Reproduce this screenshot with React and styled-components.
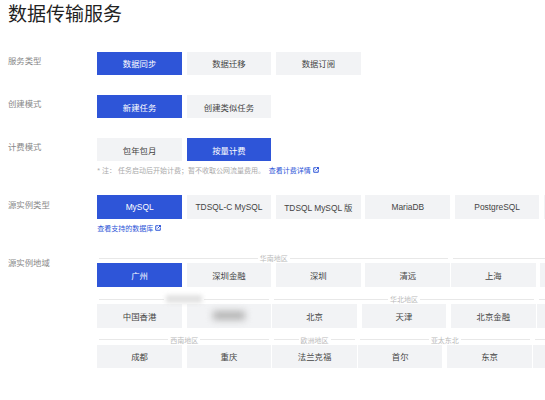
import React from 'react';
import styled, { createGlobalStyle } from 'styled-components';

const GlobalStyle = createGlobalStyle`
  html, body {
    margin: 0;
    padding: 0;
    background: #fff;
  }
  body {
    font-family: "Liberation Sans", "Noto Sans CJK SC", sans-serif;
  }
`;

const Page = styled.div`
  width: 545px;
  height: 400px;
  overflow: hidden;
  padding-left: 8px;
  box-sizing: border-box;
`;

const Title = styled.h1`
  margin: 0 0 25.7px;
  height: 24px;
  padding-top: 2px;
  font-size: 19px;
  line-height: 26px;
  font-weight: 400;
  color: #222;
  white-space: nowrap;
`;

const Row = styled.div`
  display: flex;
  margin-bottom: 19.5px;
`;

const RowLabel = styled.div`
  flex: none;
  width: 89.3px;
  margin-top: 3.3px;
  font-size: 8.4px;
  line-height: 12px;
  color: #888;
`;

const Controls = styled.div`
  flex: 1;
  min-width: 0;
`;

const Options = styled.div`
  display: flex;
  gap: 4.8px;
`;

const Option = styled.div`
  flex: none;
  width: 84.6px;
  height: 23.6px;
  display: flex;
  align-items: center;
  justify-content: center;
  font-size: 8.4px;
  white-space: nowrap;
  color: ${(p) => (p.$active ? '#fff' : '#444')};
  background: ${(p) => (p.$active ? '#2e55d8' : '#f2f3f5')};
`;

const Hint = styled.div`
  margin-top: ${(p) => p.$top}px;
  height: 10px;
  font-size: 7px;
  line-height: 10px;
  color: #aaa;
  white-space: nowrap;
`;

const HintLink = styled.span`
  margin-left: ${(p) => p.$left || 0}px;
  color: #2e55d8;

  svg {
    margin-left: 2px;
    vertical-align: -0.5px;
  }
`;

const RegionRows = styled.div`
  display: flex;
  flex-direction: column;
  gap: 7px;
`;

const RegionRow = styled.div`
  display: flex;
  gap: 1px;
`;

const Group = styled.div`
  flex: none;
`;

const GroupHead = styled.div`
  display: flex;
  align-items: center;
  gap: 2px;
  height: 10px;
  padding: 0 2px;
  font-size: 7px;
  color: #bbb;
  white-space: nowrap;

  &::before,
  &::after {
    content: '';
    flex: 1;
    height: 1px;
    background: #e8e8e8;
  }
`;

// 参考图里被打码的区域
const Masked = styled.div`
  width: ${(p) => p.$w}px;
  height: ${(p) => p.$h}px;
  background: ${(p) => p.$color};
  filter: blur(${(p) => p.$blur}px);
`;

const regionRows = [
  [
    { label: '华南地区', items: ['广州', '深圳金融', '深圳', '清远'] },
    { items: ['上海', '', ''] },
  ],
  [
    { masked: true, items: ['中国香港', null] },
    { label: '华北地区', items: ['北京', '天津', '北京金融'] },
    { items: ['', ''] },
  ],
  [
    { label: '西南地区', items: ['成都', '重庆'] },
    { label: '欧洲地区', items: ['法兰克福'] },
    { label: '亚太东北', items: ['首尔', '东京'] },
    { items: ['', ''] },
  ],
];

const LinkIcon = () => (
  <svg width="6" height="6" viewBox="0 0 12 12" fill="none" stroke="currentColor" strokeWidth="2">
    <path d="M6 1.5H1.5v9h9V6" />
    <path d="M5 7L11 1M7 1h4v4" />
  </svg>
);

const Link = ({ left, children }) => (
  <HintLink $left={left}>
    {children}
    <LinkIcon />
  </HintLink>
);

const ChoiceRow = ({ label, options, active }) => (
  <Row>
    <RowLabel>{label}</RowLabel>
    <Controls>
      <Options>
        {options.map((o) => (
          <Option key={o} $active={o === active}>{o}</Option>
        ))}
      </Options>
    </Controls>
  </Row>
);

const App = () => (
  <Page>
    <GlobalStyle />
    <Title>数据传输服务</Title>

    <ChoiceRow label="服务类型" options={['数据同步', '数据迁移', '数据订阅']} active="数据同步" />
    <ChoiceRow label="创建模式" options={['新建任务', '创建类似任务']} active="新建任务" />

    <Row>
      <RowLabel>计费模式</RowLabel>
      <Controls>
        <Options>
          <Option>包年包月</Option>
          <Option $active>按量计费</Option>
        </Options>
        <Hint $top={4.4}>
          * 注： 任务启动后开始计费；暂不收取公网流量费用。 <Link left={2}>查看计费详情</Link>
        </Hint>
      </Controls>
    </Row>

    <Row>
      <RowLabel>源实例类型</RowLabel>
      <Controls>
        <Options>
          <Option $active>MySQL</Option>
          <Option>TDSQL-C MySQL</Option>
          <Option>TDSQL MySQL 版</Option>
          <Option>MariaDB</Option>
          <Option>PostgreSQL</Option>
          <Option />
        </Options>
        <Hint $top={5}>
          <Link>查看支持的数据库</Link>
        </Hint>
      </Controls>
    </Row>

    <Row>
      <RowLabel>源实例地域</RowLabel>
      <Controls>
        <RegionRows>
          {regionRows.map((groups, i) => (
            <RegionRow key={i}>
              {groups.map((g, j) => (
                <Group key={j}>
                  <GroupHead>
                    {g.masked ? <Masked $w={36} $h={8} $color="#e2e2e2" $blur={2} /> : g.label}
                  </GroupHead>
                  <Options>
                    {g.items.map((item, k) => (
                      <Option key={k} $active={item === '广州'}>
                        {item === null ? <Masked $w={32} $h={9} $color="#b4b4b4" $blur={3.5} /> : item}
                      </Option>
                    ))}
                  </Options>
                </Group>
              ))}
            </RegionRow>
          ))}
        </RegionRows>
      </Controls>
    </Row>
  </Page>
);

export default App;
